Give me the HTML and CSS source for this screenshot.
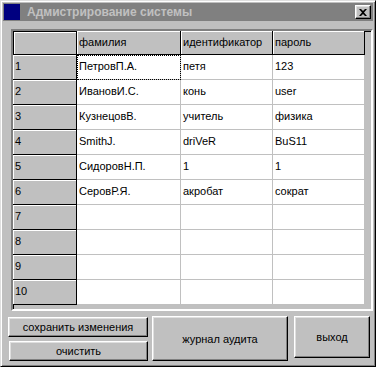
FILE: index.html
```html
<!DOCTYPE html>
<html lang="ru">
<head>
    <meta charset="UTF-8">
    <title>Адмистрирование системы</title>
    <link rel="stylesheet" href="styles.css">
</head>
<body>
    <div class="window">
        <div class="title-bar">
            <div class="title-icon"></div>
            <span class="title-text">Адмистрирование системы</span>
            <button class="close-btn">
                <svg width="8" height="7" viewBox="0 0 8 7"><path d="M0 0h2l2 2 2-2h2L5 3.5 8 7H6L4 5 2 7H0l3-3.5z" fill="#000"/></svg>
            </button>
        </div>

        <div class="grid">
            <div class="grid-inner">
                <div class="row">
                    <div class="cell fixed"></div>
                    <div class="cell fixed c1">фамилия</div>
                    <div class="cell fixed c2">идентификатор</div>
                    <div class="cell fixed c3">пароль</div>
                </div>
                <div class="row">
                    <div class="cell fixed">1</div>
                    <div class="cell c1 focused">ПетровП.А.</div>
                    <div class="cell c2">петя</div>
                    <div class="cell c3">123</div>
                </div>
                <div class="row">
                    <div class="cell fixed">2</div>
                    <div class="cell c1">ИвановИ.С.</div>
                    <div class="cell c2">конь</div>
                    <div class="cell c3">user</div>
                </div>
                <div class="row">
                    <div class="cell fixed">3</div>
                    <div class="cell c1">КузнецовВ.</div>
                    <div class="cell c2">учитель</div>
                    <div class="cell c3">физика</div>
                </div>
                <div class="row">
                    <div class="cell fixed">4</div>
                    <div class="cell c1">SmithJ.</div>
                    <div class="cell c2">driVeR</div>
                    <div class="cell c3">BuS11</div>
                </div>
                <div class="row">
                    <div class="cell fixed">5</div>
                    <div class="cell c1">СидоровН.П.</div>
                    <div class="cell c2">1</div>
                    <div class="cell c3">1</div>
                </div>
                <div class="row">
                    <div class="cell fixed">6</div>
                    <div class="cell c1">СеровР.Я.</div>
                    <div class="cell c2">акробат</div>
                    <div class="cell c3">сократ</div>
                </div>
                <div class="row">
                    <div class="cell fixed">7</div>
                    <div class="cell c1"></div>
                    <div class="cell c2"></div>
                    <div class="cell c3"></div>
                </div>
                <div class="row">
                    <div class="cell fixed">8</div>
                    <div class="cell c1"></div>
                    <div class="cell c2"></div>
                    <div class="cell c3"></div>
                </div>
                <div class="row">
                    <div class="cell fixed">9</div>
                    <div class="cell c1"></div>
                    <div class="cell c2"></div>
                    <div class="cell c3"></div>
                </div>
                <div class="row">
                    <div class="cell fixed">10</div>
                    <div class="cell c1"></div>
                    <div class="cell c2"></div>
                    <div class="cell c3"></div>
                </div>
            </div>
        </div>

        <div class="buttons">
            <div class="btn-stack">
                <button class="btn btn-save">сохранить изменения</button>
                <button class="btn btn-clear">очистить</button>
            </div>
            <button class="btn btn-audit">журнал аудита</button>
            <button class="btn btn-exit">выход</button>
        </div>
    </div>
</body>
</html>
```

FILE: styles.css
```css
* {
    margin: 0;
    padding: 0;
    box-sizing: border-box;
}

body {
    background: #fff;
    font-family: 'Liberation Sans', Arial, sans-serif;
    font-size: 11px;
    color: #000;
}

.window {
    width: 376px;
    height: 367px;
    background: #c0c0c0;
    border: 1px solid;
    border-color: #dfdfdf #000 #000 #dfdfdf;
    box-shadow: inset 1px 1px #fff, inset -1px -1px #808080;
    padding: 2px;
}

.title-bar {
    height: 18px;
    background: #808080;
    display: flex;
    align-items: center;
    padding: 0 2px 0 1px;
}

.title-icon {
    width: 16px;
    height: 16px;
    background: #000080;
}

.title-text {
    flex: 1;
    margin-left: 7px;
    font-weight: bold;
    font-size: 12px;
    color: #c0c0c0;
}

.close-btn {
    width: 16px;
    height: 14px;
    background: #c0c0c0;
    border: 1px solid;
    border-color: #fff #000 #000 #fff;
    box-shadow: inset -1px -1px #808080, inset 1px 1px #dfdfdf;
    display: flex;
    align-items: center;
    justify-content: center;
}

.grid {
    margin: 8px 0 0 8px;
    width: 362px;
    height: 282px;
    border: 2px solid;
    border-color: #808080 #fff #fff #808080;
    box-shadow: inset 1px 1px #000;
    background: #c0c0c0;
}

.grid-inner {
    display: flex;
    flex-direction: column;
}

.row {
    display: flex;
    height: 25px;
}

.row:first-child {
    height: 24px;
}

.cell {
    height: 100%;
    background: #fff;
    border-right: 1px solid #c0c0c0;
    border-bottom: 1px solid #c0c0c0;
    padding: 5px 0 0 2px;
    line-height: 13px;
    white-space: nowrap;
    overflow: hidden;
}

.cell.fixed {
    width: 64px;
    background: #c0c0c0;
    border-right-color: #000;
    border-bottom-color: #000;
    box-shadow: inset 1px 1px #fff;
}

.row:first-child .cell.fixed:first-child {
    box-shadow: inset 1px 1px #000, inset 2px 2px #fff;
}

.cell.c1 {
    width: 104px;
}

.cell.c2,
.cell.c3 {
    width: 92px;
}

.focused {
    outline: 1px dotted #000;
    outline-offset: -1px;
}

.buttons {
    display: flex;
    align-items: flex-start;
    margin-top: 6px;
    padding-left: 5px;
}

.btn-stack {
    display: flex;
    flex-direction: column;
    gap: 4px;
}

.btn {
    font-family: 'Liberation Sans', Arial, sans-serif;
    font-size: 11px;
    color: #000;
    background: #c0c0c0;
    border: 1px solid;
    border-color: #fff #000 #000 #fff;
    box-shadow: inset -1px -1px #808080, inset 1px 1px #dfdfdf;
}

.btn-save {
    width: 140px;
    height: 20px;
}

.btn-clear {
    width: 139px;
    height: 20px;
    margin-left: 1px;
}

.btn-audit {
    width: 136px;
    height: 45px;
    margin-left: 4px;
    margin-top: -1px;
}

.btn-exit {
    width: 76px;
    height: 42px;
    margin-left: 6px;
    margin-top: -1px;
}
```
